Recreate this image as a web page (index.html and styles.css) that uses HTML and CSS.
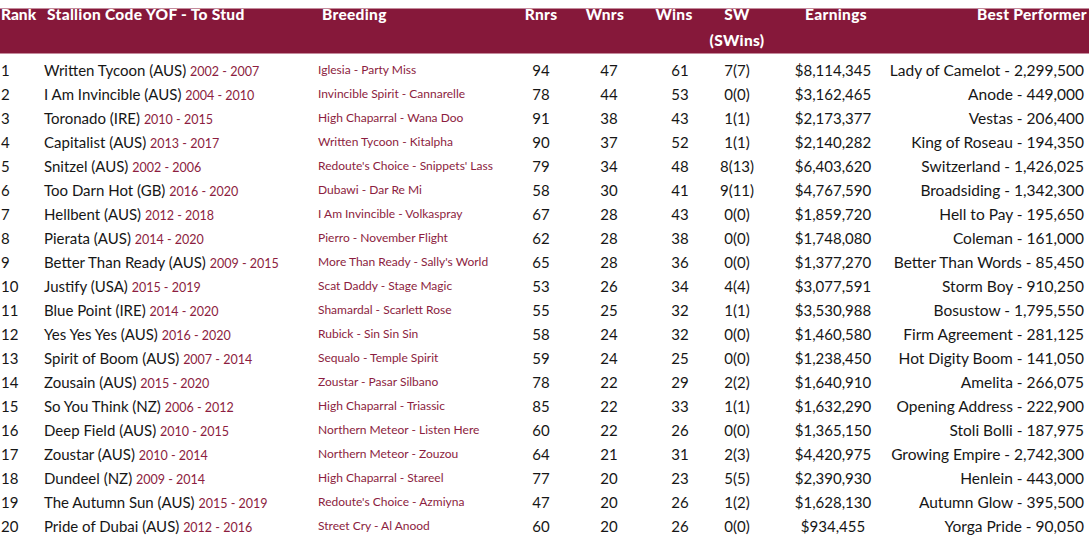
FILE: index.html
```html
<!DOCTYPE html>
<html>
<head>
<meta charset="utf-8">
<link rel="stylesheet" href="styles.css">
</head>
<body>
<div class="table">
  <div class="row head">
    <div class="c rank">Rank</div>
    <div class="c stal h-stal">Stallion Code YOF - To Stud</div>
    <div class="c breed h-breed">Breeding</div>
    <div class="c num">Rnrs</div>
    <div class="c num h-wnrs">Wnrs</div>
    <div class="c num h-wins">Wins</div>
    <div class="c num">SW<br>(SWins)</div>
    <div class="c num h-earn">Earnings</div>
    <div class="c best h-best">Best Performer</div>
  </div>
  <div class="body" id="body"></div>
</div>
<script src="app.js"></script>
</body>
</html>
```
FILE: app.js
```js
const data = [
["1","Written Tycoon (AUS)","2002 - 2007","Iglesia - Party Miss","94","47","61","7(7)","$8,114,345","Lady of Camelot - 2,299,500"],
["2","I Am Invincible (AUS)","2004 - 2010","Invincible Spirit - Cannarelle","78","44","53","0(0)","$3,162,465","Anode - 449,000"],
["3","Toronado (IRE)","2010 - 2015","High Chaparral - Wana Doo","91","38","43","1(1)","$2,173,377","Vestas - 206,400"],
["4","Capitalist (AUS)","2013 - 2017","Written Tycoon - Kitalpha","90","37","52","1(1)","$2,140,282","King of Roseau - 194,350"],
["5","Snitzel (AUS)","2002 - 2006","Redoute's Choice - Snippets' Lass","79","34","48","8(13)","$6,403,620","Switzerland - 1,426,025"],
["6","Too Darn Hot (GB)","2016 - 2020","Dubawi - Dar Re Mi","58","30","41","9(11)","$4,767,590","Broadsiding - 1,342,300"],
["7","Hellbent (AUS)","2012 - 2018","I Am Invincible - Volkaspray","67","28","43","0(0)","$1,859,720","Hell to Pay - 195,650"],
["8","Pierata (AUS)","2014 - 2020","Pierro - November Flight","62","28","38","0(0)","$1,748,080","Coleman - 161,000"],
["9","Better Than Ready (AUS)","2009 - 2015","More Than Ready - Sally's World","65","28","36","0(0)","$1,377,270","Better Than Words - 85,450"],
["10","Justify (USA)","2015 - 2019","Scat Daddy - Stage Magic","53","26","34","4(4)","$3,077,591","Storm Boy - 910,250"],
["11","Blue Point (IRE)","2014 - 2020","Shamardal - Scarlett Rose","55","25","32","1(1)","$3,530,988","Bosustow - 1,795,550"],
["12","Yes Yes Yes (AUS)","2016 - 2020","Rubick - Sin Sin Sin","58","24","32","0(0)","$1,460,580","Firm Agreement - 281,125"],
["13","Spirit of Boom (AUS)","2007 - 2014","Sequalo - Temple Spirit","59","24","25","0(0)","$1,238,450","Hot Digity Boom - 141,050"],
["14","Zousain (AUS)","2015 - 2020","Zoustar - Pasar Silbano","78","22","29","2(2)","$1,640,910","Amelita - 266,075"],
["15","So You Think (NZ)","2006 - 2012","High Chaparral - Triassic","85","22","33","1(1)","$1,632,290","Opening Address - 222,900"],
["16","Deep Field (AUS)","2010 - 2015","Northern Meteor - Listen Here","60","22","26","0(0)","$1,365,150","Stoli Bolli - 187,975"],
["17","Zoustar (AUS)","2010 - 2014","Northern Meteor - Zouzou","64","21","31","2(3)","$4,420,975","Growing Empire - 2,742,300"],
["18","Dundeel (NZ)","2009 - 2014","High Chaparral - Stareel","77","20","23","5(5)","$2,390,930","Henlein - 443,000"],
["19","The Autumn Sun (AUS)","2015 - 2019","Redoute's Choice - Azmiyna","47","20","26","1(2)","$1,628,130","Autumn Glow - 395,500"],
["20","Pride of Dubai (AUS)","2012 - 2016","Street Cry - Al Anood","60","20","26","0(0)","$934,455","Yorga Pride - 90,050"]
];
const body = document.getElementById("body");
for (const r of data) {
  const row = document.createElement("div");
  row.className = "row";
  row.innerHTML =
    `<div class="c rank">${r[0]}</div>` +
    `<div class="c stal">${r[1]} <span class="yof">${r[2]}</span></div>` +
    `<div class="c breed">${r[3]}</div>` +
    `<div class="c num">${r[4]}</div>` +
    `<div class="c num">${r[5]}</div>` +
    `<div class="c num">${r[6]}</div>` +
    `<div class="c num">${r[7]}</div>` +
    `<div class="c num">${r[8]}</div>` +
    `<div class="c best"><span>${r[9]}</span></div>`;
  body.appendChild(row);
}
```
FILE: styles.css
```css
html, body {
  margin: 0;
  padding: 0;
  background: #ffffff;
}
body {
  font-family: "Lato", "Open Sans", sans-serif;
  color: #161616;
}
.table {
  width: 1089px;
  padding-top: 1px;
}
.row {
  display: grid;
  grid-template-columns: 44px 274px 200px 46px 90px 52px 62px 130px 1fr;
  padding-right: 5px;
  height: 24px;
  font-size: 15px;
  line-height: 24px;
  white-space: nowrap;
}
.c {
  height: 24px;
  min-width: 0;
}
.head {
  height: 52px;
  font-size: 15.5px;
  font-weight: 900;
  letter-spacing: 0.3px;
  line-height: 26px;
  color: #ffffff;
  background: linear-gradient(to bottom, #ffffff 0, #ffffff 7px, #c48b9c 7px, #c48b9c 8px, #86183a 8px, #86183a 52px);
  border-bottom: 1px solid #c48b9c;
  padding-right: 2px;
}
.head .c {
  height: 52px;
}
.body {
  padding-top: 4px;
}
.c.rank {
  padding-left: 1px;
  letter-spacing: 0;
}
.num {
  text-align: center;
}
.best {
  display: flex;
  justify-content: flex-end;
}
.body .best {
  font-size: 15.5px;
}
.h-stal { padding-left: 3px; }
.h-breed { padding-left: 4px; }
.h-wnrs { padding-right: 8px; }
.h-wins { padding-right: 12px; }
.h-earn { padding-left: 6px; }
.yof {
  font-size: 12.5px;
  line-height: 1;
  color: #8c1d40;
}
.row .breed {
  font-size: 12px;
  color: #8c1d40;
  font-weight: 400;
}
.head .breed {
  font-size: 15.5px;
  color: #ffffff;
  font-weight: 900;
}
```
